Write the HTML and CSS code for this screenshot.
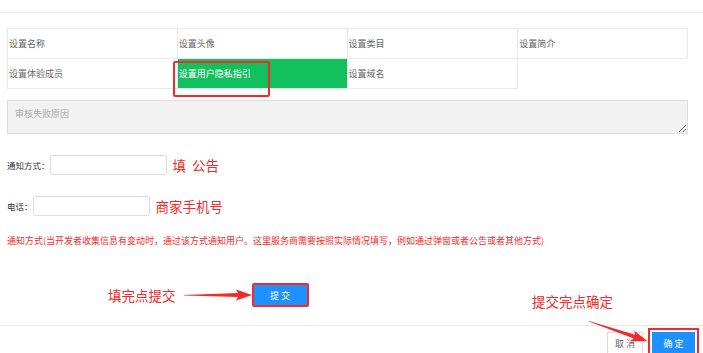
FILE: index.html
```html
<!DOCTYPE html>
<html lang="zh-CN">
<head>
  <meta charset="UTF-8" />
  <meta name="viewport" content="width=device-width, initial-scale=1.0"/>
  <title>设置隐私指引</title>
  <link rel="stylesheet" href="styles.css">
</head>
<body>
  <div class="topbar"></div>

  <div class="content">
    <div class="steps-wrap">
      <table class="steps">
        <colgroup>
          <col style="width:170px"><col style="width:170px"><col style="width:171px"><col style="width:170px">
        </colgroup>
        <tr>
          <td>设置名称</td>
          <td>设置头像</td>
          <td>设置类目</td>
          <td>设置简介</td>
        </tr>
        <tr>
          <td>设置体验成员</td>
          <td class="active">设置用户隐私指引</td>
          <td>设置域名</td>
        </tr>
      </table>
      <div class="mark-box"></div>
    </div>

    <textarea class="reason" placeholder="审核失败原因" disabled></textarea>

    <div class="field">
      <label for="notice">通知方式：</label>
      <input type="text" id="notice" class="notice-input" />
      <span class="hint">填&nbsp; 公告</span>
    </div>

    <div class="field">
      <label for="phone">电话：</label>
      <input type="text" id="phone" class="phone-input" />
      <span class="hint">商家手机号</span>
    </div>

    <p class="note">通知方式(当开发者收集信息有变动时，通过该方式通知用户。这里服务商需要按照实际情况填写，例如通过弹窗或者公告或者其他方式)</p>

    <div class="submit-row">
      <span class="hint">填完点提交</span>
      <svg class="arrow" width="68" height="12" viewBox="0 0 68 12">
        <polygon points="0,6 54,4 52,0.5 68,6 52,11.5 54,8 0,6.6" fill="#f32a2a"/>
      </svg>
      <button class="btn btn-primary btn-marked">提 交</button>
    </div>
  </div>

  <div class="footer">
    <span class="hint footer-hint">提交完点确定</span>
    <svg class="arrow footer-arrow" width="62" height="12" viewBox="0 0 62 12">
      <polygon points="0,6 48,4 46,0.5 62,6 46,11.5 48,8 0,6.6" fill="#f32a2a"/>
    </svg>
    <button class="btn btn-default">取 消</button>
    <button class="btn btn-primary btn-outlined">确 定</button>
  </div>
</body>
</html>
```

FILE: styles.css
```css
body {
  margin: 0;
  background: #fff;
  font-family: "Noto Sans CJK SC", "Noto Sans", sans-serif;
  color: #333;
}
.topbar {
  height: 12px;
  border-bottom: 1px solid #e8e8e8;
}
.content {
  padding: 0 15px 0 7px;
}
.steps-wrap {
  position: relative;
  margin-top: 15px;
}
.steps {
  border-collapse: collapse;
  table-layout: fixed;
  font-size: 9px;
  color: #666;
}
.steps td {
  height: 29px;
  padding: 0 1px;
  border: 1px solid #e8e8e8;
  white-space: nowrap;
}
.steps td.active {
  background: #13c05e;
  color: #fff;
}
.mark-box {
  position: absolute;
  left: 166px;
  top: 33px;
  width: 93px;
  height: 32px;
  border: 2px solid #f32a2a;
  border-radius: 2px;
}
.reason {
  display: block;
  box-sizing: border-box;
  width: 100%;
  height: 34px;
  margin-top: 11px;
  padding: 6px 7px;
  border: 1px solid #ddd;
  background: #f2f2f2;
  font-family: inherit;
  font-size: 9px;
}
.reason::placeholder {
  color: #aaa;
}
.field {
  display: flex;
  align-items: center;
  margin-top: 21px;
  height: 20px;
  font-size: 8.5px;
}
.field label {
  color: #333;
}
.field input {
  box-sizing: border-box;
  height: 20px;
  border: 1px solid #ddd;
  border-radius: 2px;
  padding: 0 4px;
  margin-right: 6px;
}
.notice-input,
.phone-input {
  width: 117px;
}
.hint {
  color: #f32a2a;
  font-size: 13.5px;
  white-space: nowrap;
}
.note {
  margin: 19px 0 0;
  font-size: 9px;
  line-height: 12px;
  color: #f32a2a;
  white-space: nowrap;
}
.submit-row {
  display: flex;
  align-items: center;
  margin-top: 36px;
  padding-left: 101px;
}
.submit-row .arrow {
  margin-left: 8px;
}
.btn {
  font-family: inherit;
  font-size: 9px;
  cursor: pointer;
  box-sizing: border-box;
}
.btn-primary {
  background: #1e90ff;
  color: #fff;
  border: none;
}
.btn-marked {
  width: 57px;
  height: 24px;
  border: 2px solid #f32a2a;
  border-radius: 2px;
}
.footer {
  position: relative;
  margin-top: 18px;
  border-top: 1px solid #e8e8e8;
  padding: 6px 8px 0 0;
  display: flex;
  justify-content: flex-end;
  gap: 9px;
}
.btn-default {
  width: 36px;
  height: 22px;
  background: #fff;
  color: #666;
  border: 1px solid #ddd;
}
.btn-outlined {
  width: 43px;
  height: 22px;
  outline: 2px solid #f32a2a;
  outline-offset: 2px;
}
.footer-hint {
  position: absolute;
  left: 532px;
  top: -35px;
}
.footer-arrow {
  position: absolute;
  left: 589px;
  top: -11px;
  transform-origin: 0 6px;
  transform: rotate(19deg);
}
```
